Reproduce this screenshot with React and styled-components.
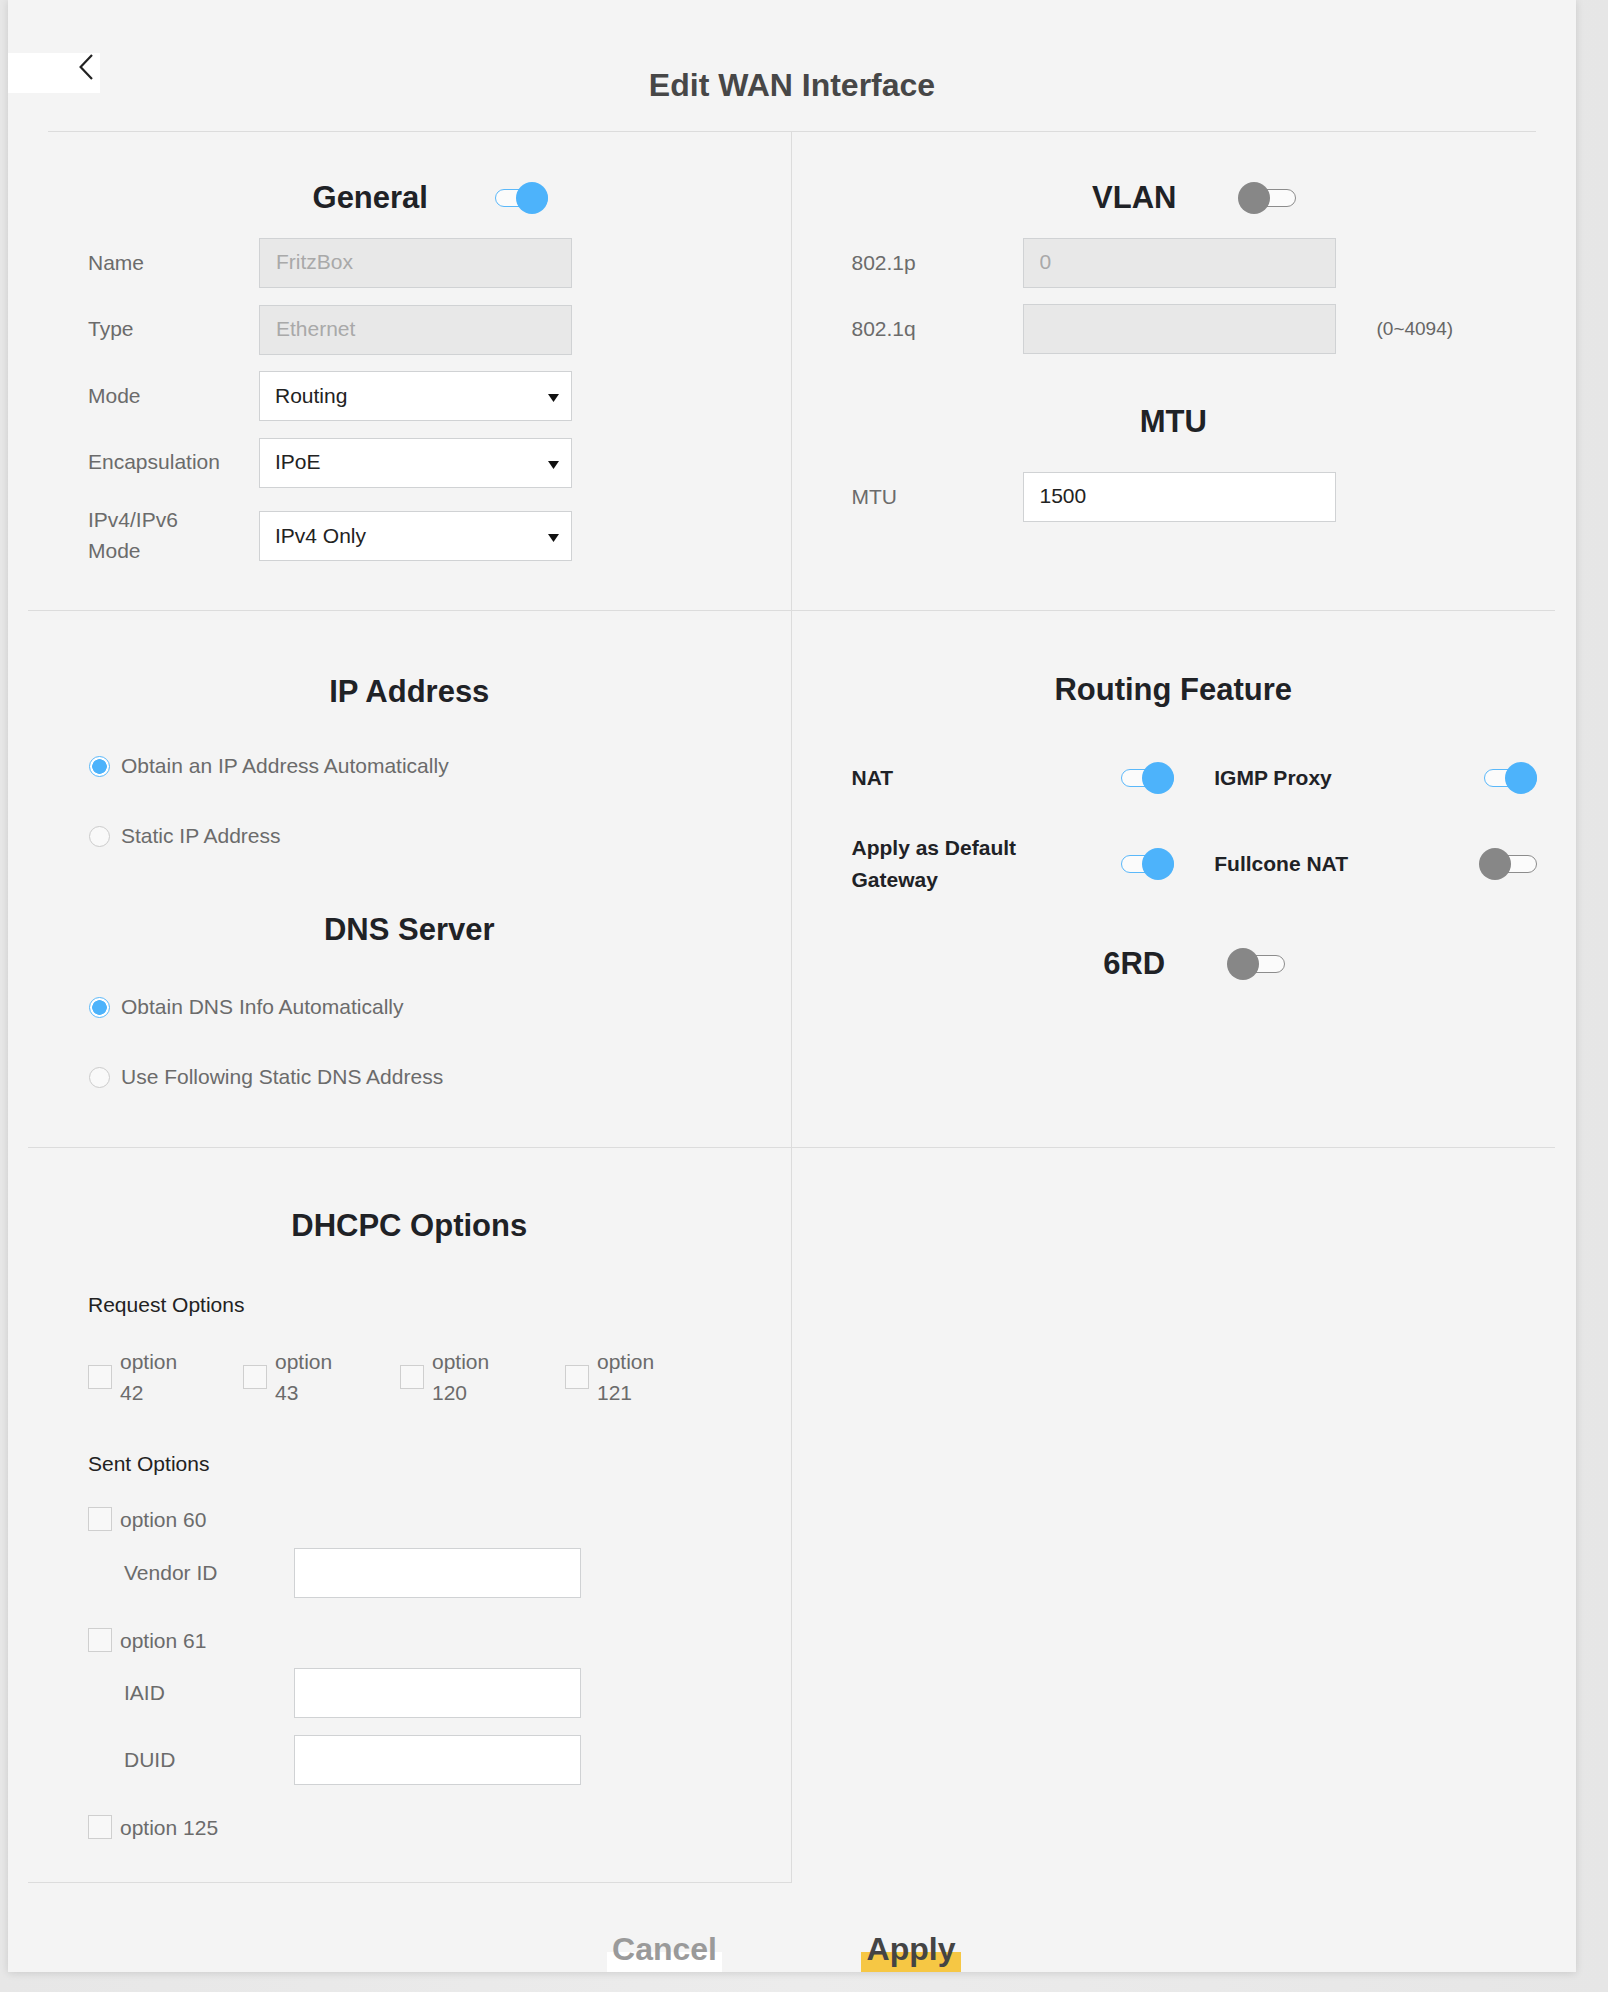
import React, { useState } from "react";
import styled, { createGlobalStyle } from "styled-components";

const GlobalStyle = createGlobalStyle`
  html, body {
    margin: 0;
    padding: 0;
    background: #e9e9e9;
  }
  body {
    font-family: "Liberation Sans", Arial, Helvetica, sans-serif;
  }
  *, *::before, *::after {
    box-sizing: border-box;
  }
`;

const BLUE = "#4db3fb";
const RULE = "#dcdcdc";

const Page = styled.div`
  width: 1608px;
  min-height: 1992px;
  padding-left: 8px;
  background: linear-gradient(to right, #e7e7e7, #ececec 50%, #e6e6e6);
`;

const Panel = styled.main`
  width: 1568px;
  background: #f4f4f4;
  box-shadow: 0 1px 8px rgba(0, 0, 0, 0.13);
  overflow: hidden;
  display: flex;
  flex-direction: column;
`;

/* ---------- header ---------- */

const Header = styled.header`
  display: grid;
  grid-template-columns: 92px 1fr 92px;
  align-items: start;
  height: 131px;
`;

const BackButton = styled.button`
  margin-top: 53px;
  width: 92px;
  height: 40px;
  padding: 1px 7px 0 0;
  border: none;
  background: #fff;
  display: flex;
  justify-content: flex-end;
  align-items: flex-start;
  cursor: pointer;
`;

const Title = styled.h1`
  margin: 65px 0 0;
  font-size: 32px;
  line-height: 40px;
  font-weight: 700;
  color: #474747;
  text-align: center;
`;

const HeaderRule = styled.hr`
  margin: 0 40px;
  height: 1px;
  border: none;
  background: ${RULE};
`;

/* ---------- section grid ---------- */

const Sections = styled.div`
  display: grid;
  grid-template-columns: 1fr 1fr;
  grid-template-rows: 479px 537px 735px;
  margin: 0 21px 0 20px;
`;

const Cell = styled.section`
  display: flex;
  flex-direction: column;
  padding-top: ${(p) => p.$top}px;
  border-right: ${(p) => (p.$left ? `1px solid ${RULE}` : "none")};
  border-bottom: ${(p) => (p.$ruled ? `1px solid ${RULE}` : "none")};
`;

const HeadingRow = styled.div`
  display: flex;
  align-items: center;
  justify-content: center;
  gap: 62px;
  height: 40px;
  flex-shrink: 0;
  margin-top: ${(p) => p.$mt || 0}px;
  padding-left: ${(p) => (p.$withToggle ? 42 : 0)}px;
`;

const Heading = styled.h2`
  margin: 0;
  font-size: 31px;
  line-height: 40px;
  font-weight: 700;
  color: #1f2226;
  white-space: nowrap;
`;

/* ---------- toggle ---------- */

const ToggleBox = styled.button`
  position: relative;
  width: 58px;
  height: 32px;
  padding: 0;
  border: none;
  background: none;
  flex-shrink: 0;
  cursor: pointer;
`;

const Track = styled.span`
  position: absolute;
  left: 5px;
  top: 7px;
  width: 53px;
  height: 18px;
  border-radius: 9px;
  border: 1.5px solid ${(p) => (p.$on ? "#5ab8fa" : "#8c8c8c")};
  background: #fbfbfb;
`;

const Knob = styled.span`
  position: absolute;
  top: 0;
  left: ${(p) => (p.$on ? 26 : 0)}px;
  width: 32px;
  height: 32px;
  border-radius: 50%;
  background: ${(p) => (p.$on ? BLUE : "#878787")};
`;

function Toggle({ initial }) {
  const [on, setOn] = useState(initial);
  return (
    <ToggleBox type="button" aria-pressed={on} onClick={() => setOn(!on)}>
      <Track $on={on} />
      <Knob $on={on} />
    </ToggleBox>
  );
}

/* ---------- form fields ---------- */

const FieldRow = styled.div`
  display: flex;
  align-items: center;
  min-height: 50px;
  flex-shrink: 0;
  margin-top: ${(p) => p.$mt || 0}px;
  padding-left: ${(p) => p.$indent ?? 60}px;
`;

const FieldLabel = styled.label`
  width: ${(p) => p.$w || 171}px;
  flex-shrink: 0;
  padding-right: 30px;
  padding-bottom: 2px;
  font-size: 21px;
  line-height: 31px;
  color: #6b6b6b;
`;

const TextInput = styled.input`
  width: ${(p) => p.$w || 313}px;
  height: 50px;
  padding: 0 16px 2px;
  border: 1.5px solid #d0d2d4;
  border-radius: 0;
  background: #fff;
  font-family: inherit;
  font-size: 21px;
  color: #222;
  outline: none;

  &:disabled {
    background: #e8e8e8;
    color: #a9a9a9;
    -webkit-text-fill-color: #a9a9a9;
  }
`;

const SelectWrap = styled.div`
  position: relative;
  width: 313px;
  height: 50px;
`;

const Select = styled.select`
  appearance: none;
  width: 100%;
  height: 100%;
  padding: 0 40px 2px 15px;
  border: 1.5px solid #d0d2d4;
  border-radius: 0;
  background: #fff;
  font-family: inherit;
  font-size: 21px;
  color: #222;
  outline: none;
`;

const Caret = styled.svg`
  position: absolute;
  right: 13px;
  top: 23px;
  width: 11px;
  height: 8px;
  pointer-events: none;
`;

const Hint = styled.span`
  margin-left: 41px;
  font-size: 19px;
  color: #666;
`;

function Dropdown({ value, options }) {
  return (
    <SelectWrap>
      <Select defaultValue={value}>
        {options.map((o) => (
          <option key={o}>{o}</option>
        ))}
      </Select>
      <Caret viewBox="0 0 11 8">
        <path d="M0 0 H11 L5.5 8 Z" fill="#111" />
      </Caret>
    </SelectWrap>
  );
}

/* ---------- radios & checkboxes ---------- */

const RadioRow = styled.label`
  display: flex;
  align-items: center;
  gap: 11px;
  height: 31px;
  flex-shrink: 0;
  margin-top: ${(p) => p.$mt || 0}px;
  padding-left: 61px;
  font-size: 21px;
  color: #6b6b6b;
  cursor: pointer;
`;

const Radio = styled.input.attrs({ type: "radio" })`
  appearance: none;
  margin: 0;
  width: 21px;
  height: 21px;
  flex-shrink: 0;
  border-radius: 50%;
  border: 1.5px solid #cbcbcb;
  background: #f9f9f9;

  &:checked {
    border-color: #5ab8fa;
    background: radial-gradient(circle, ${BLUE} 0 7px, #fff 7.6px);
  }
`;

const CheckItem = styled.label`
  display: flex;
  align-items: center;
  gap: 8px;
  font-size: 21px;
  line-height: 31px;
  color: #6b6b6b;
  cursor: pointer;
`;

const CheckBox = styled.input.attrs({ type: "checkbox" })`
  appearance: none;
  margin: 0;
  width: 24px;
  height: 24px;
  flex-shrink: 0;
  border: 1.5px solid #cfcfcf;
  background: #f8f8f8;

  &:checked {
    background: ${BLUE};
    border-color: ${BLUE};
  }
`;

const CheckText = styled.span`
  max-width: ${(p) => (p.$narrow ? "60px" : "none")};
`;

const RequestGrid = styled.div`
  display: grid;
  grid-template-columns: 155px 157px 165px auto;
  flex-shrink: 0;
  margin-top: ${(p) => p.$mt || 0}px;
  padding-left: 60px;
`;

const SubTitle = styled.div`
  flex-shrink: 0;
  margin-top: ${(p) => p.$mt || 0}px;
  padding-left: 60px;
  font-size: 21px;
  line-height: 31px;
  color: #222;
`;

const CheckRow = styled.div`
  display: flex;
  flex-shrink: 0;
  margin-top: ${(p) => p.$mt || 0}px;
  padding-left: 60px;
`;

/* ---------- routing features ---------- */

const FeatureGrid = styled.div`
  display: grid;
  grid-template-columns: 1fr 1fr;
  column-gap: 40px;
  row-gap: 38px;
  flex-shrink: 0;
  margin-top: ${(p) => p.$mt || 0}px;
  padding: 0 18px 0 60px;
`;

const Feature = styled.div`
  display: flex;
  align-items: center;
  justify-content: space-between;
  min-height: 32px;
`;

const FeatureLabel = styled.span`
  max-width: 200px;
  font-size: 21px;
  line-height: 32px;
  font-weight: 700;
  color: #1f2226;
`;

/* ---------- footer ---------- */

const Footer = styled.footer`
  height: 89px;
  display: flex;
  justify-content: center;
  align-items: flex-end;
  gap: 139px;
  padding-right: 16px;
`;

const ActionButton = styled.button`
  width: ${(p) => p.$w}px;
  height: 46px;
  padding: 0;
  border: none;
  font-family: inherit;
  font-size: 32px;
  font-weight: 700;
  line-height: 46px;
  color: ${(p) => (p.$primary ? "#444" : "#9a9a9a")};
  background: linear-gradient(
    to bottom,
    transparent 0 26px,
    ${(p) => (p.$primary ? "#f6c744" : "#fff")} 26px
  );
  cursor: pointer;
`;

export default function App() {
  return (
    <>
      <GlobalStyle />
      <Page>
        <Panel>
          <Header>
            <BackButton type="button" aria-label="Back">
              <svg width="14" height="26" viewBox="0 0 14 26">
                <polyline
                  points="13,1 1.6,13 13,25"
                  fill="none"
                  stroke="#222"
                  strokeWidth="2.2"
                />
              </svg>
            </BackButton>
            <Title>Edit WAN Interface</Title>
            <div />
          </Header>
          <HeaderRule />

          <Sections>
            {/* General */}
            <Cell $left $ruled $top={46}>
              <HeadingRow $withToggle>
                <Heading>General</Heading>
                <Toggle initial={true} />
              </HeadingRow>
              <FieldRow $mt={20}>
                <FieldLabel>Name</FieldLabel>
                <TextInput disabled value="FritzBox" readOnly />
              </FieldRow>
              <FieldRow $mt={16.5}>
                <FieldLabel>Type</FieldLabel>
                <TextInput disabled value="Ethernet" readOnly />
              </FieldRow>
              <FieldRow $mt={16.5}>
                <FieldLabel>Mode</FieldLabel>
                <Dropdown value="Routing" options={["Routing", "Bridge"]} />
              </FieldRow>
              <FieldRow $mt={16.5}>
                <FieldLabel>Encapsulation</FieldLabel>
                <Dropdown value="IPoE" options={["IPoE", "PPPoE"]} />
              </FieldRow>
              <FieldRow $mt={16.5}>
                <FieldLabel>IPv4/IPv6 Mode</FieldLabel>
                <Dropdown
                  value="IPv4 Only"
                  options={["IPv4 Only", "IPv6 Only", "IPv4/IPv6"]}
                />
              </FieldRow>
            </Cell>

            {/* VLAN + MTU */}
            <Cell $ruled $top={46}>
              <HeadingRow $withToggle>
                <Heading>VLAN</Heading>
                <Toggle initial={false} />
              </HeadingRow>
              <FieldRow $mt={20}>
                <FieldLabel>802.1p</FieldLabel>
                <TextInput disabled value="0" readOnly />
              </FieldRow>
              <FieldRow $mt={16}>
                <FieldLabel>802.1q</FieldLabel>
                <TextInput disabled value="" readOnly />
                <Hint>(0~4094)</Hint>
              </FieldRow>
              <HeadingRow $mt={48}>
                <Heading>MTU</Heading>
              </HeadingRow>
              <FieldRow $mt={30}>
                <FieldLabel>MTU</FieldLabel>
                <TextInput defaultValue="1500" />
              </FieldRow>
            </Cell>

            {/* IP address + DNS */}
            <Cell $left $ruled $top={61}>
              <HeadingRow>
                <Heading>IP Address</Heading>
              </HeadingRow>
              <RadioRow $mt={38.5}>
                <Radio name="ip" defaultChecked />
                Obtain an IP Address Automatically
              </RadioRow>
              <RadioRow $mt={39}>
                <Radio name="ip" />
                Static IP Address
              </RadioRow>
              <HeadingRow $mt={58.5}>
                <Heading>DNS Server</Heading>
              </HeadingRow>
              <RadioRow $mt={41.5}>
                <Radio name="dns" defaultChecked />
                Obtain DNS Info Automatically
              </RadioRow>
              <RadioRow $mt={39}>
                <Radio name="dns" />
                Use Following Static DNS Address
              </RadioRow>
            </Cell>

            {/* Routing features */}
            <Cell $ruled $top={59}>
              <HeadingRow>
                <Heading>Routing Feature</Heading>
              </HeadingRow>
              <FeatureGrid $mt={52}>
                <Feature>
                  <FeatureLabel>NAT</FeatureLabel>
                  <Toggle initial={true} />
                </Feature>
                <Feature>
                  <FeatureLabel>IGMP Proxy</FeatureLabel>
                  <Toggle initial={true} />
                </Feature>
                <Feature>
                  <FeatureLabel>Apply as Default Gateway</FeatureLabel>
                  <Toggle initial={true} />
                </Feature>
                <Feature>
                  <FeatureLabel>Fullcone NAT</FeatureLabel>
                  <Toggle initial={false} />
                </Feature>
              </FeatureGrid>
              <HeadingRow $withToggle $mt={48}>
                <Heading>6RD</Heading>
                <Toggle initial={false} />
              </HeadingRow>
            </Cell>

            {/* DHCP client options */}
            <Cell $left $ruled $top={58}>
              <HeadingRow>
                <Heading>DHCPC Options</Heading>
              </HeadingRow>
              <SubTitle $mt={42.5}>Request Options</SubTitle>
              <RequestGrid $mt={26}>
                {["42", "43", "120", "121"].map((n) => (
                  <CheckItem key={n}>
                    <CheckBox />
                    <CheckText $narrow>option {n}</CheckText>
                  </CheckItem>
                ))}
              </RequestGrid>
              <SubTitle $mt={40}>Sent Options</SubTitle>
              <CheckRow $mt={25}>
                <CheckItem>
                  <CheckBox />
                  <CheckText>option 60</CheckText>
                </CheckItem>
              </CheckRow>
              <FieldRow $mt={13.5} $indent={96}>
                <FieldLabel $w={170}>Vendor ID</FieldLabel>
                <TextInput $w={287} />
              </FieldRow>
              <CheckRow $mt={26.5}>
                <CheckItem>
                  <CheckBox />
                  <CheckText>option 61</CheckText>
                </CheckItem>
              </CheckRow>
              <FieldRow $mt={12.5} $indent={96}>
                <FieldLabel $w={170}>IAID</FieldLabel>
                <TextInput $w={287} />
              </FieldRow>
              <FieldRow $mt={17} $indent={96}>
                <FieldLabel $w={170}>DUID</FieldLabel>
                <TextInput $w={287} />
              </FieldRow>
              <CheckRow $mt={26.5}>
                <CheckItem>
                  <CheckBox />
                  <CheckText>option 125</CheckText>
                </CheckItem>
              </CheckRow>
            </Cell>
            <Cell $top={0} />
          </Sections>

          <Footer>
            <ActionButton type="button" $w={115}>
              Cancel
            </ActionButton>
            <ActionButton type="button" $w={100} $primary>
              Apply
            </ActionButton>
          </Footer>
        </Panel>
      </Page>
    </>
  );
}
